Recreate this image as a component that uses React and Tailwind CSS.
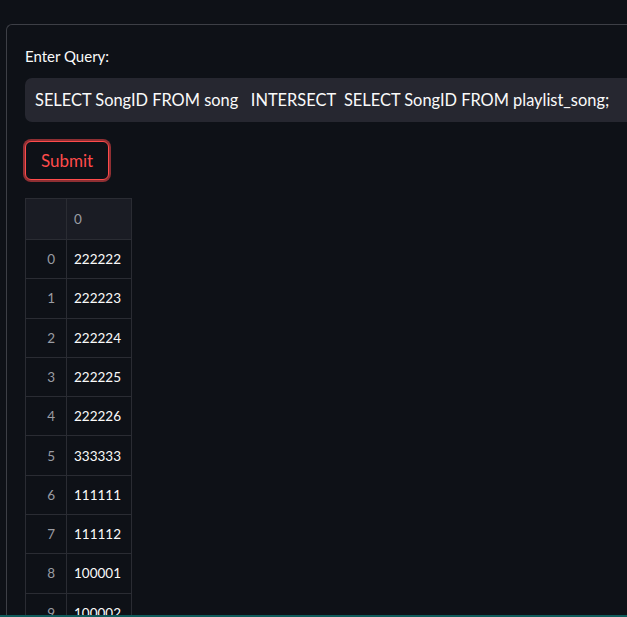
const rows = ["222222", "222223", "222224", "222225", "222226", "333333", "111111", "111112", "100001", "100002", "100003"];

export default function App() {
  return (
    <div className="h-[617px] w-[627px] overflow-hidden bg-[#0e1117] relative font-['Lato',sans-serif]">
      <div className="pt-[24px] pl-[6px]">
        <div className="border-t border-l border-[#3d3f46] rounded-tl-[6px] pl-[18px] pt-[20px] h-[700px] w-[700px]">
          <label className="block text-[15px] text-[#fafafa] leading-[22px]">Enter Query:</label>
          <div className="mt-[11px] h-[44px] bg-[#262730] rounded-l-[7px] flex items-center pl-[10px]">
            <span className="whitespace-pre text-[16.4px] text-[#fafafa]">SELECT SongID FROM song   INTERSECT  SELECT SongID FROM playlist_song;</span>
          </div>
          <div className="mt-[17px] ml-[-2px] w-[88px] h-[43px] rounded-[8px] bg-[#8f2f33] p-[2px]">
            <button className="w-full h-full rounded-[6px] border border-[#ff4b4b] bg-[#0e1117] text-[#ff4b4b] text-[17px] leading-none">
              Submit
            </button>
          </div>
          <div className="mt-[16px] w-[107px] border border-[#2a2c33] text-[13.5px]">
            <div className="flex h-[41px] bg-[#1a1c24] border-b border-[#2a2c33]">
              <div className="w-[41px] border-r border-[#2a2c33]" />
              <div className="flex-1 flex items-center pl-[7px] text-[#9a9ca3]">0</div>
            </div>
            {rows.map((v, i) => (
              <div key={i} className="flex h-[39.3px] border-b border-[#2a2c33]">
                <div className="w-[41px] border-r border-[#2a2c33] flex items-center justify-end pr-[11px] text-[#9a9ca3]">{i}</div>
                <div className="flex-1 flex items-center pl-[7px] text-[#fafafa]">{v}</div>
              </div>
            ))}
          </div>
        </div>
      </div>
      <div className="absolute bottom-0 left-0 right-0 h-[2px] bg-[#0f5c5c]" />
    </div>
  );
}
